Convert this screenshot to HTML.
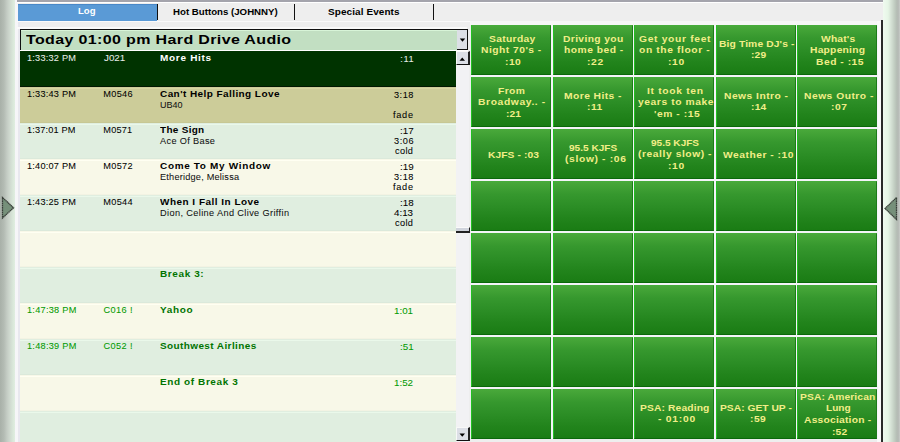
<!DOCTYPE html><html><head><meta charset="utf-8"><style>
*{margin:0;padding:0;box-sizing:border-box}
html,body{width:900px;height:442px;overflow:hidden;background:#eeeeee;font-family:"Liberation Sans",sans-serif}
.a{position:absolute}
.t{position:absolute;white-space:nowrap;line-height:1}
.b{font-weight:bold}
.r{-webkit-text-stroke:0.05px currentColor}
</style></head><body>
<div class="a" style="left:0px;top:0px;width:15px;height:442px;background:linear-gradient(to right,#a8b0a8 0px,#b4bcb4 4px,#c4ccc4 7px,#d0dad0 10px,#dae8da 13px,#e0eee0 15px)"></div>
<div class="a" style="left:15px;top:0px;width:3px;height:442px;background:#f6f6f8"></div>
<div class="a" style="left:18px;top:22px;width:2px;height:420px;background:#e8e8ee"></div>
<div class="a" style="left:883px;top:0px;width:17px;height:442px;background:linear-gradient(to right,#f0faf0 0px,#e6f6e6 5px,#d6e2d6 8px,#c4d0c4 11px,#b4bcb4 14px,#b8bcb8 15.5px,#c8ccc8 17px)"></div>
<div class="a" style="left:17px;top:0px;width:866px;height:2px;background:#a4a4ac"></div>
<div class="a" style="left:17px;top:2px;width:866px;height:1px;background:#ffffff"></div>
<div class="a" style="left:18px;top:4px;width:139px;height:17px;background:#5a9ad6;border-top:1px solid #4a88c8"></div>
<div class="a" style="left:157px;top:4px;width:1px;height:16px;background:#111"></div>
<div class="a" style="left:294px;top:4px;width:1px;height:16px;background:#111"></div>
<div class="a" style="left:433px;top:4px;width:1px;height:16px;background:#111"></div>
<div class="a" style="left:17px;top:21px;width:866px;height:1px;background:#fafafa"></div>
<div class="t b" style="left:77.80px;top:6.47px;font-size:9.6px;color:#ffffff;letter-spacing:0.000px;transform:scaleX(0.9934);transform-origin:0 0">Log</div>
<div class="t b" style="left:173.20px;top:6.87px;font-size:9.6px;color:#000;letter-spacing:0.000px;transform:scaleX(1.0080);transform-origin:0 0">Hot Buttons (JOHNNY)</div>
<div class="t b" style="left:327.80px;top:6.87px;font-size:9.6px;color:#000;letter-spacing:0.082px;transform:scaleX(1.0400);transform-origin:0 0">Special Events</div>
<div class="a" style="left:17px;top:27px;width:450px;height:2px;background:#fafafa"></div>
<div class="a" style="left:20px;top:29px;width:448px;height:21px;background:#c2dfc2;border:1px solid #111;border-bottom:none;box-shadow:inset 0 1px 0 #d8f4d8"></div>
<div class="a" style="left:20px;top:50px;width:448px;height:1px;background:#fff"></div>
<div class="t b" style="left:25.60px;top:32.50px;font-size:13.7px;color:#000;letter-spacing:0.303px;transform:scaleX(1.1700);transform-origin:0 0">Today 01:00 pm Hard Drive Audio</div>
<div class="a" style="left:457px;top:30px;width:10px;height:20px;background:#dcdfe6;border-bottom:1px solid #111"></div>
<svg class="a" style="left:459px;top:38px" width="7" height="5"><polygon points="0.8,0.5 6.2,0.5 3.5,3.8" fill="#000"/></svg>
<div class="a" style="left:20px;top:51px;width:436px;height:36px;background:#003300"></div>
<div class="a" style="left:20px;top:86px;width:436px;height:1px;background:#001800"></div>
<div class="t r" style="left:26.90px;top:53.71px;font-size:9.2px;color:#e8ece8;letter-spacing:0.238px;transform:scaleX(1.0000);transform-origin:0 0">1:33:32 PM</div>
<div class="t r" style="left:103.50px;top:53.71px;font-size:9.2px;color:#e8ece8;letter-spacing:0.000px;transform:scaleX(1.0650);transform-origin:0 0">J021</div>
<div class="t b" style="left:159.70px;top:53.37px;font-size:9.6px;color:#ffffff;letter-spacing:0.676px;transform:scaleX(1.0400);transform-origin:0 0">More Hits</div>
<div class="t r" style="left:400.30px;top:55.11px;font-size:9.2px;color:#e8ece8;letter-spacing:0.551px;transform:scaleX(1.0000);transform-origin:0 0">:11</div>
<div class="a" style="left:20px;top:87px;width:436px;height:36px;background:#cccc99"></div>
<div class="a" style="left:20px;top:88px;width:436px;height:1px;background:#d6d6a3"></div>
<div class="a" style="left:20px;top:122px;width:436px;height:1px;background:#c7c794"></div>
<div class="t r" style="left:26.90px;top:89.71px;font-size:9.2px;color:#000;letter-spacing:0.238px;transform:scaleX(1.0000);transform-origin:0 0">1:33:43 PM</div>
<div class="t r" style="left:103.30px;top:89.71px;font-size:9.2px;color:#000;letter-spacing:0.312px;transform:scaleX(1.0000);transform-origin:0 0">M0546</div>
<div class="t b" style="left:159.70px;top:89.37px;font-size:9.6px;color:#000;letter-spacing:0.416px;transform:scaleX(1.0400);transform-origin:0 0">Can't Help Falling Love</div>
<div class="t r" style="left:160.00px;top:100.51px;font-size:9.2px;color:#111;letter-spacing:0.000px;transform:scaleX(0.9783);transform-origin:0 0">UB40</div>
<div class="t r" style="left:393.90px;top:91.11px;font-size:9.2px;color:#000;letter-spacing:0.569px;transform:scaleX(1.0000);transform-origin:0 0">3:18</div>
<div class="t r" style="left:393.00px;top:110.71px;font-size:9.2px;color:#000;letter-spacing:0.702px;transform:scaleX(1.0000);transform-origin:0 0">fade</div>
<div class="a" style="left:20px;top:123px;width:436px;height:36px;background:#e0eee0"></div>
<div class="a" style="left:20px;top:124px;width:436px;height:1px;background:#eaf8ea"></div>
<div class="a" style="left:20px;top:158px;width:436px;height:1px;background:#dbe9db"></div>
<div class="t r" style="left:26.90px;top:125.71px;font-size:9.2px;color:#000;letter-spacing:0.171px;transform:scaleX(1.0000);transform-origin:0 0">1:37:01 PM</div>
<div class="t r" style="left:103.30px;top:125.71px;font-size:9.2px;color:#000;letter-spacing:0.187px;transform:scaleX(1.0000);transform-origin:0 0">M0571</div>
<div class="t b" style="left:160.00px;top:125.37px;font-size:9.6px;color:#000;letter-spacing:0.284px;transform:scaleX(1.0400);transform-origin:0 0">The Sign</div>
<div class="t r" style="left:160.00px;top:136.51px;font-size:9.2px;color:#111;letter-spacing:0.334px;transform:scaleX(1.0000);transform-origin:0 0">Ace Of Base</div>
<div class="t r" style="left:399.88px;top:127.11px;font-size:9.2px;color:#000;letter-spacing:0.000px;transform:scaleX(1.0650);transform-origin:0 0">:17</div>
<div class="t r" style="left:394.00px;top:136.91px;font-size:9.2px;color:#000;letter-spacing:0.569px;transform:scaleX(1.0000);transform-origin:0 0">3:06</div>
<div class="t r" style="left:395.00px;top:146.71px;font-size:9.2px;color:#000;letter-spacing:0.373px;transform:scaleX(1.0000);transform-origin:0 0">cold</div>
<div class="a" style="left:20px;top:159px;width:436px;height:36px;background:#f8f8e8"></div>
<div class="a" style="left:20px;top:160px;width:436px;height:1px;background:#fffff2"></div>
<div class="a" style="left:20px;top:194px;width:436px;height:1px;background:#f3f3e3"></div>
<div class="t r" style="left:26.90px;top:161.71px;font-size:9.2px;color:#000;letter-spacing:0.238px;transform:scaleX(1.0000);transform-origin:0 0">1:40:07 PM</div>
<div class="t r" style="left:103.30px;top:161.71px;font-size:9.2px;color:#000;letter-spacing:0.312px;transform:scaleX(1.0000);transform-origin:0 0">M0572</div>
<div class="t b" style="left:160.00px;top:161.37px;font-size:9.6px;color:#000;letter-spacing:0.644px;transform:scaleX(1.0400);transform-origin:0 0">Come To My Window</div>
<div class="t r" style="left:160.00px;top:172.51px;font-size:9.2px;color:#111;letter-spacing:0.205px;transform:scaleX(1.0000);transform-origin:0 0">Etheridge, Melissa</div>
<div class="t r" style="left:399.88px;top:163.11px;font-size:9.2px;color:#000;letter-spacing:0.000px;transform:scaleX(1.0650);transform-origin:0 0">:19</div>
<div class="t r" style="left:393.90px;top:172.91px;font-size:9.2px;color:#000;letter-spacing:0.569px;transform:scaleX(1.0000);transform-origin:0 0">3:18</div>
<div class="t r" style="left:393.00px;top:182.71px;font-size:9.2px;color:#000;letter-spacing:0.702px;transform:scaleX(1.0000);transform-origin:0 0">fade</div>
<div class="a" style="left:20px;top:195px;width:436px;height:36px;background:#e0eee0"></div>
<div class="a" style="left:20px;top:196px;width:436px;height:1px;background:#eaf8ea"></div>
<div class="a" style="left:20px;top:230px;width:436px;height:1px;background:#dbe9db"></div>
<div class="t r" style="left:26.90px;top:197.71px;font-size:9.2px;color:#000;letter-spacing:0.238px;transform:scaleX(1.0000);transform-origin:0 0">1:43:25 PM</div>
<div class="t r" style="left:103.30px;top:197.71px;font-size:9.2px;color:#000;letter-spacing:0.312px;transform:scaleX(1.0000);transform-origin:0 0">M0544</div>
<div class="t b" style="left:160.00px;top:197.37px;font-size:9.6px;color:#000;letter-spacing:0.470px;transform:scaleX(1.0400);transform-origin:0 0">When I Fall In Love</div>
<div class="t r" style="left:160.00px;top:208.51px;font-size:9.2px;color:#111;letter-spacing:0.371px;transform:scaleX(1.0000);transform-origin:0 0">Dion, Celine And Clive Griffin</div>
<div class="t r" style="left:399.88px;top:199.11px;font-size:9.2px;color:#000;letter-spacing:0.000px;transform:scaleX(1.0650);transform-origin:0 0">:18</div>
<div class="t r" style="left:394.43px;top:208.91px;font-size:9.2px;color:#000;letter-spacing:0.000px;transform:scaleX(1.0650);transform-origin:0 0">4:13</div>
<div class="t r" style="left:395.00px;top:218.71px;font-size:9.2px;color:#000;letter-spacing:0.373px;transform:scaleX(1.0000);transform-origin:0 0">cold</div>
<div class="a" style="left:20px;top:231px;width:436px;height:36px;background:#f8f8e8"></div>
<div class="a" style="left:20px;top:232px;width:436px;height:1px;background:#fffff2"></div>
<div class="a" style="left:20px;top:266px;width:436px;height:1px;background:#f3f3e3"></div>
<div class="a" style="left:20px;top:267px;width:436px;height:36px;background:#e0eee0"></div>
<div class="a" style="left:20px;top:268px;width:436px;height:1px;background:#eaf8ea"></div>
<div class="a" style="left:20px;top:302px;width:436px;height:1px;background:#dbe9db"></div>
<div class="t b" style="left:159.50px;top:269.37px;font-size:9.6px;color:#007400;letter-spacing:0.592px;transform:scaleX(1.0400);transform-origin:0 0">Break 3:</div>
<div class="a" style="left:20px;top:303px;width:436px;height:36px;background:#f8f8e8"></div>
<div class="a" style="left:20px;top:304px;width:436px;height:1px;background:#fffff2"></div>
<div class="a" style="left:20px;top:338px;width:436px;height:1px;background:#f3f3e3"></div>
<div class="t r" style="left:27.00px;top:305.71px;font-size:9.2px;color:#009a00;letter-spacing:0.260px;transform:scaleX(1.0000);transform-origin:0 0">1:47:38 PM</div>
<div class="t r" style="left:103.40px;top:305.71px;font-size:9.2px;color:#009a00;letter-spacing:0.401px;transform:scaleX(1.0000);transform-origin:0 0">C016 !</div>
<div class="t b" style="left:160.00px;top:305.37px;font-size:9.6px;color:#007400;letter-spacing:0.637px;transform:scaleX(1.0400);transform-origin:0 0">Yahoo</div>
<div class="t r" style="left:394.43px;top:307.11px;font-size:9.2px;color:#009a00;letter-spacing:0.000px;transform:scaleX(1.0650);transform-origin:0 0">1:01</div>
<div class="a" style="left:20px;top:339px;width:436px;height:36px;background:#e0eee0"></div>
<div class="a" style="left:20px;top:340px;width:436px;height:1px;background:#eaf8ea"></div>
<div class="a" style="left:20px;top:374px;width:436px;height:1px;background:#dbe9db"></div>
<div class="t r" style="left:27.00px;top:341.71px;font-size:9.2px;color:#009a00;letter-spacing:0.260px;transform:scaleX(1.0000);transform-origin:0 0">1:48:39 PM</div>
<div class="t r" style="left:103.40px;top:341.71px;font-size:9.2px;color:#009a00;letter-spacing:0.401px;transform:scaleX(1.0000);transform-origin:0 0">C052 !</div>
<div class="t b" style="left:160.00px;top:341.37px;font-size:9.6px;color:#007400;letter-spacing:0.384px;transform:scaleX(1.0400);transform-origin:0 0">Southwest Airlines</div>
<div class="t r" style="left:399.88px;top:343.11px;font-size:9.2px;color:#009a00;letter-spacing:0.000px;transform:scaleX(1.0650);transform-origin:0 0">:51</div>
<div class="a" style="left:20px;top:375px;width:436px;height:36px;background:#f8f8e8"></div>
<div class="a" style="left:20px;top:376px;width:436px;height:1px;background:#fffff2"></div>
<div class="a" style="left:20px;top:410px;width:436px;height:1px;background:#f3f3e3"></div>
<div class="t b" style="left:160.00px;top:377.37px;font-size:9.6px;color:#007400;letter-spacing:0.585px;transform:scaleX(1.0400);transform-origin:0 0">End of Break 3</div>
<div class="t r" style="left:394.43px;top:379.11px;font-size:9.2px;color:#009a00;letter-spacing:0.000px;transform:scaleX(1.0650);transform-origin:0 0">1:52</div>
<div class="a" style="left:20px;top:411px;width:436px;height:36px;background:#e0eee0"></div>
<div class="a" style="left:20px;top:412px;width:436px;height:1px;background:#eaf8ea"></div>
<div class="a" style="left:20px;top:446px;width:436px;height:1px;background:#dbe9db"></div>
<div class="a" style="left:456px;top:51px;width:13px;height:391px;background:#f2f2f4"></div>
<div class="a" style="left:456px;top:51px;width:14px;height:14px;background:#dcdfe6;border-top:1px solid #f8f8f8;border-left:1px solid #f8f8f8;border-right:2px solid #222;border-bottom:1px solid #111"></div>
<svg class="a" style="left:459px;top:56.5px" width="7" height="5"><polygon points="0.5,3.8 6,3.8 3.25,0.4" fill="#000"/></svg>
<div class="a" style="left:456px;top:427px;width:14px;height:14px;background:#dcdfe6;border-top:1px solid #f8f8f8;border-left:1px solid #f8f8f8;border-right:2px solid #222;border-bottom:1px solid #111"></div>
<svg class="a" style="left:459px;top:432.5px" width="7" height="5"><polygon points="0.5,0.4 6,0.4 3.25,3.8" fill="#000"/></svg>
<div class="a" style="left:456px;top:227px;width:14px;height:6px;background:#d0d4dc;border-right:1.5px solid #222;border-bottom:2px solid #222;border-top:1px solid #fafafa"></div>
<div class="a" style="left:470px;top:21px;width:413px;height:4px;background:#f6f6f6"></div>
<div class="a" style="left:881px;top:20px;width:2px;height:422px;background:#2a2a2a"></div>
<div class="a" style="left:877px;top:21px;width:4px;height:421px;background:#fafafa"></div>
<div class="a" style="left:471px;top:25px;width:406.5px;height:414px;background:#f4f4f8"></div>
<div class="a" style="left:471.00px;top:25px;width:80.1px;height:50px;background:linear-gradient(#48a83a,#36982e 25%,#2c8e26 50%,#22841c 75%,#1a7c14);border-left:1px solid #22c022;border-top:1px solid #46ac3a;border-right:1px solid #1c7c18;border-bottom:1px solid #0a680a"></div>
<div class="t b" style="left:488.50px;top:33.51px;font-size:9.9px;color:#f2ee88;letter-spacing:0.320px;transform:scaleX(1.0400);transform-origin:0 0">Saturday</div>
<div class="t b" style="left:481.30px;top:45.21px;font-size:9.9px;color:#f2ee88;letter-spacing:0.465px;transform:scaleX(1.0400);transform-origin:0 0">Night 70's -</div>
<div class="t b" style="left:505.20px;top:56.91px;font-size:9.9px;color:#f2ee88;letter-spacing:0.443px;transform:scaleX(1.0400);transform-origin:0 0">:10</div>
<div class="a" style="left:552.60px;top:25px;width:80.1px;height:50px;background:linear-gradient(#48a83a,#36982e 25%,#2c8e26 50%,#22841c 75%,#1a7c14);border-left:1px solid #22c022;border-top:1px solid #46ac3a;border-right:1px solid #1c7c18;border-bottom:1px solid #0a680a"></div>
<div class="t b" style="left:562.80px;top:33.51px;font-size:9.9px;color:#f2ee88;letter-spacing:0.353px;transform:scaleX(1.0400);transform-origin:0 0">Driving you</div>
<div class="t b" style="left:563.70px;top:45.21px;font-size:9.9px;color:#f2ee88;letter-spacing:0.478px;transform:scaleX(1.0400);transform-origin:0 0">home bed -</div>
<div class="t b" style="left:587.10px;top:56.91px;font-size:9.9px;color:#f2ee88;letter-spacing:0.636px;transform:scaleX(1.0400);transform-origin:0 0">:22</div>
<div class="a" style="left:634.20px;top:25px;width:80.1px;height:50px;background:linear-gradient(#48a83a,#36982e 25%,#2c8e26 50%,#22841c 75%,#1a7c14);border-left:1px solid #22c022;border-top:1px solid #46ac3a;border-right:1px solid #1c7c18;border-bottom:1px solid #0a680a"></div>
<div class="t b" style="left:639.00px;top:33.51px;font-size:9.9px;color:#f2ee88;letter-spacing:0.655px;transform:scaleX(1.0400);transform-origin:0 0">Get your feet</div>
<div class="t b" style="left:639.00px;top:45.21px;font-size:9.9px;color:#f2ee88;letter-spacing:0.584px;transform:scaleX(1.0400);transform-origin:0 0">on the floor -</div>
<div class="t b" style="left:668.10px;top:56.91px;font-size:9.9px;color:#f2ee88;letter-spacing:0.636px;transform:scaleX(1.0400);transform-origin:0 0">:10</div>
<div class="a" style="left:715.80px;top:25px;width:80.1px;height:50px;background:linear-gradient(#48a83a,#36982e 25%,#2c8e26 50%,#22841c 75%,#1a7c14);border-left:1px solid #22c022;border-top:1px solid #46ac3a;border-right:1px solid #1c7c18;border-bottom:1px solid #0a680a"></div>
<div class="t b" style="left:718.70px;top:38.76px;font-size:9.9px;color:#f2ee88;letter-spacing:0.126px;transform:scaleX(1.0400);transform-origin:0 0">Big Time DJ's -</div>
<div class="t b" style="left:750.80px;top:50.46px;font-size:9.9px;color:#f2ee88;letter-spacing:0.155px;transform:scaleX(1.0400);transform-origin:0 0">:29</div>
<div class="a" style="left:797.40px;top:25px;width:80.1px;height:50px;background:linear-gradient(#48a83a,#36982e 25%,#2c8e26 50%,#22841c 75%,#1a7c14);border-left:1px solid #22c022;border-top:1px solid #46ac3a;border-right:1px solid #1c7c18;border-bottom:1px solid #0a680a"></div>
<div class="t b" style="left:821.00px;top:33.51px;font-size:9.9px;color:#f2ee88;letter-spacing:0.181px;transform:scaleX(1.0400);transform-origin:0 0">What's</div>
<div class="t b" style="left:810.30px;top:45.21px;font-size:9.9px;color:#f2ee88;letter-spacing:0.231px;transform:scaleX(1.0400);transform-origin:0 0">Happening</div>
<div class="t b" style="left:815.50px;top:56.91px;font-size:9.9px;color:#f2ee88;letter-spacing:0.505px;transform:scaleX(1.0400);transform-origin:0 0">Bed - :15</div>
<div class="a" style="left:471.00px;top:77px;width:80.1px;height:50px;background:linear-gradient(#48a83a,#36982e 25%,#2c8e26 50%,#22841c 75%,#1a7c14);border-left:1px solid #22c022;border-top:1px solid #46ac3a;border-right:1px solid #1c7c18;border-bottom:1px solid #0a680a"></div>
<div class="t b" style="left:498.00px;top:85.51px;font-size:9.9px;color:#f2ee88;letter-spacing:0.404px;transform:scaleX(1.0400);transform-origin:0 0">From</div>
<div class="t b" style="left:477.80px;top:97.21px;font-size:9.9px;color:#f2ee88;letter-spacing:0.609px;transform:scaleX(1.0400);transform-origin:0 0">Broadway.. -</div>
<div class="t b" style="left:505.60px;top:108.91px;font-size:9.9px;color:#f2ee88;letter-spacing:0.011px;transform:scaleX(1.0400);transform-origin:0 0">:21</div>
<div class="a" style="left:552.60px;top:77px;width:80.1px;height:50px;background:linear-gradient(#48a83a,#36982e 25%,#2c8e26 50%,#22841c 75%,#1a7c14);border-left:1px solid #22c022;border-top:1px solid #46ac3a;border-right:1px solid #1c7c18;border-bottom:1px solid #0a680a"></div>
<div class="t b" style="left:564.20px;top:90.76px;font-size:9.9px;color:#f2ee88;letter-spacing:0.425px;transform:scaleX(1.0400);transform-origin:0 0">More Hits -</div>
<div class="t b" style="left:587.10px;top:102.46px;font-size:9.9px;color:#f2ee88;letter-spacing:0.475px;transform:scaleX(1.0400);transform-origin:0 0">:11</div>
<div class="a" style="left:634.20px;top:77px;width:80.1px;height:50px;background:linear-gradient(#48a83a,#36982e 25%,#2c8e26 50%,#22841c 75%,#1a7c14);border-left:1px solid #22c022;border-top:1px solid #46ac3a;border-right:1px solid #1c7c18;border-bottom:1px solid #0a680a"></div>
<div class="t b" style="left:647.00px;top:85.51px;font-size:9.9px;color:#f2ee88;letter-spacing:0.672px;transform:scaleX(1.0400);transform-origin:0 0">It took ten</div>
<div class="t b" style="left:637.50px;top:97.21px;font-size:9.9px;color:#f2ee88;letter-spacing:0.555px;transform:scaleX(1.0400);transform-origin:0 0">years to make</div>
<div class="t b" style="left:654.20px;top:108.91px;font-size:9.9px;color:#f2ee88;letter-spacing:0.536px;transform:scaleX(1.0400);transform-origin:0 0">'em - :15</div>
<div class="a" style="left:715.80px;top:77px;width:80.1px;height:50px;background:linear-gradient(#48a83a,#36982e 25%,#2c8e26 50%,#22841c 75%,#1a7c14);border-left:1px solid #22c022;border-top:1px solid #46ac3a;border-right:1px solid #1c7c18;border-bottom:1px solid #0a680a"></div>
<div class="t b" style="left:723.90px;top:90.76px;font-size:9.9px;color:#f2ee88;letter-spacing:0.459px;transform:scaleX(1.0400);transform-origin:0 0">News Intro -</div>
<div class="t b" style="left:750.90px;top:102.46px;font-size:9.9px;color:#f2ee88;letter-spacing:0.203px;transform:scaleX(1.0400);transform-origin:0 0">:14</div>
<div class="a" style="left:797.40px;top:77px;width:80.1px;height:50px;background:linear-gradient(#48a83a,#36982e 25%,#2c8e26 50%,#22841c 75%,#1a7c14);border-left:1px solid #22c022;border-top:1px solid #46ac3a;border-right:1px solid #1c7c18;border-bottom:1px solid #0a680a"></div>
<div class="t b" style="left:803.50px;top:90.76px;font-size:9.9px;color:#f2ee88;letter-spacing:0.481px;transform:scaleX(1.0400);transform-origin:0 0">News Outro -</div>
<div class="t b" style="left:831.40px;top:102.46px;font-size:9.9px;color:#f2ee88;letter-spacing:0.491px;transform:scaleX(1.0400);transform-origin:0 0">:07</div>
<div class="a" style="left:471.00px;top:129px;width:80.1px;height:50px;background:linear-gradient(#48a83a,#36982e 25%,#2c8e26 50%,#22841c 75%,#1a7c14);border-left:1px solid #22c022;border-top:1px solid #46ac3a;border-right:1px solid #1c7c18;border-bottom:1px solid #0a680a"></div>
<div class="t b" style="left:487.80px;top:149.61px;font-size:9.9px;color:#f2ee88;letter-spacing:0.070px;transform:scaleX(1.0400);transform-origin:0 0">KJFS - :03</div>
<div class="a" style="left:552.60px;top:129px;width:80.1px;height:50px;background:linear-gradient(#48a83a,#36982e 25%,#2c8e26 50%,#22841c 75%,#1a7c14);border-left:1px solid #22c022;border-top:1px solid #46ac3a;border-right:1px solid #1c7c18;border-bottom:1px solid #0a680a"></div>
<div class="t b" style="left:569.10px;top:142.76px;font-size:9.9px;color:#f2ee88;letter-spacing:0.000px;transform:scaleX(1.0207);transform-origin:0 0">95.5 KJFS</div>
<div class="t b" style="left:564.50px;top:154.46px;font-size:9.9px;color:#f2ee88;letter-spacing:0.630px;transform:scaleX(1.0400);transform-origin:0 0">(slow) - :06</div>
<div class="a" style="left:634.20px;top:129px;width:80.1px;height:50px;background:linear-gradient(#48a83a,#36982e 25%,#2c8e26 50%,#22841c 75%,#1a7c14);border-left:1px solid #22c022;border-top:1px solid #46ac3a;border-right:1px solid #1c7c18;border-bottom:1px solid #0a680a"></div>
<div class="t b" style="left:651.00px;top:137.51px;font-size:9.9px;color:#f2ee88;letter-spacing:0.000px;transform:scaleX(1.0186);transform-origin:0 0">95.5 KJFS</div>
<div class="t b" style="left:637.60px;top:149.21px;font-size:9.9px;color:#f2ee88;letter-spacing:0.543px;transform:scaleX(1.0400);transform-origin:0 0">(really slow) -</div>
<div class="t b" style="left:668.10px;top:160.91px;font-size:9.9px;color:#f2ee88;letter-spacing:0.636px;transform:scaleX(1.0400);transform-origin:0 0">:10</div>
<div class="a" style="left:715.80px;top:129px;width:80.1px;height:50px;background:linear-gradient(#48a83a,#36982e 25%,#2c8e26 50%,#22841c 75%,#1a7c14);border-left:1px solid #22c022;border-top:1px solid #46ac3a;border-right:1px solid #1c7c18;border-bottom:1px solid #0a680a"></div>
<div class="t b" style="left:722.60px;top:149.61px;font-size:9.9px;color:#f2ee88;letter-spacing:0.493px;transform:scaleX(1.0400);transform-origin:0 0">Weather - :10</div>
<div class="a" style="left:797.40px;top:129px;width:80.1px;height:50px;background:linear-gradient(#48a83a,#36982e 25%,#2c8e26 50%,#22841c 75%,#1a7c14);border-left:1px solid #22c022;border-top:1px solid #46ac3a;border-right:1px solid #1c7c18;border-bottom:1px solid #0a680a"></div>
<div class="a" style="left:471.00px;top:181px;width:80.1px;height:50px;background:linear-gradient(#48a83a,#36982e 25%,#2c8e26 50%,#22841c 75%,#1a7c14);border-left:1px solid #22c022;border-top:1px solid #46ac3a;border-right:1px solid #1c7c18;border-bottom:1px solid #0a680a"></div>
<div class="a" style="left:552.60px;top:181px;width:80.1px;height:50px;background:linear-gradient(#48a83a,#36982e 25%,#2c8e26 50%,#22841c 75%,#1a7c14);border-left:1px solid #22c022;border-top:1px solid #46ac3a;border-right:1px solid #1c7c18;border-bottom:1px solid #0a680a"></div>
<div class="a" style="left:634.20px;top:181px;width:80.1px;height:50px;background:linear-gradient(#48a83a,#36982e 25%,#2c8e26 50%,#22841c 75%,#1a7c14);border-left:1px solid #22c022;border-top:1px solid #46ac3a;border-right:1px solid #1c7c18;border-bottom:1px solid #0a680a"></div>
<div class="a" style="left:715.80px;top:181px;width:80.1px;height:50px;background:linear-gradient(#48a83a,#36982e 25%,#2c8e26 50%,#22841c 75%,#1a7c14);border-left:1px solid #22c022;border-top:1px solid #46ac3a;border-right:1px solid #1c7c18;border-bottom:1px solid #0a680a"></div>
<div class="a" style="left:797.40px;top:181px;width:80.1px;height:50px;background:linear-gradient(#48a83a,#36982e 25%,#2c8e26 50%,#22841c 75%,#1a7c14);border-left:1px solid #22c022;border-top:1px solid #46ac3a;border-right:1px solid #1c7c18;border-bottom:1px solid #0a680a"></div>
<div class="a" style="left:471.00px;top:233px;width:80.1px;height:50px;background:linear-gradient(#48a83a,#36982e 25%,#2c8e26 50%,#22841c 75%,#1a7c14);border-left:1px solid #22c022;border-top:1px solid #46ac3a;border-right:1px solid #1c7c18;border-bottom:1px solid #0a680a"></div>
<div class="a" style="left:552.60px;top:233px;width:80.1px;height:50px;background:linear-gradient(#48a83a,#36982e 25%,#2c8e26 50%,#22841c 75%,#1a7c14);border-left:1px solid #22c022;border-top:1px solid #46ac3a;border-right:1px solid #1c7c18;border-bottom:1px solid #0a680a"></div>
<div class="a" style="left:634.20px;top:233px;width:80.1px;height:50px;background:linear-gradient(#48a83a,#36982e 25%,#2c8e26 50%,#22841c 75%,#1a7c14);border-left:1px solid #22c022;border-top:1px solid #46ac3a;border-right:1px solid #1c7c18;border-bottom:1px solid #0a680a"></div>
<div class="a" style="left:715.80px;top:233px;width:80.1px;height:50px;background:linear-gradient(#48a83a,#36982e 25%,#2c8e26 50%,#22841c 75%,#1a7c14);border-left:1px solid #22c022;border-top:1px solid #46ac3a;border-right:1px solid #1c7c18;border-bottom:1px solid #0a680a"></div>
<div class="a" style="left:797.40px;top:233px;width:80.1px;height:50px;background:linear-gradient(#48a83a,#36982e 25%,#2c8e26 50%,#22841c 75%,#1a7c14);border-left:1px solid #22c022;border-top:1px solid #46ac3a;border-right:1px solid #1c7c18;border-bottom:1px solid #0a680a"></div>
<div class="a" style="left:471.00px;top:285px;width:80.1px;height:50px;background:linear-gradient(#48a83a,#36982e 25%,#2c8e26 50%,#22841c 75%,#1a7c14);border-left:1px solid #22c022;border-top:1px solid #46ac3a;border-right:1px solid #1c7c18;border-bottom:1px solid #0a680a"></div>
<div class="a" style="left:552.60px;top:285px;width:80.1px;height:50px;background:linear-gradient(#48a83a,#36982e 25%,#2c8e26 50%,#22841c 75%,#1a7c14);border-left:1px solid #22c022;border-top:1px solid #46ac3a;border-right:1px solid #1c7c18;border-bottom:1px solid #0a680a"></div>
<div class="a" style="left:634.20px;top:285px;width:80.1px;height:50px;background:linear-gradient(#48a83a,#36982e 25%,#2c8e26 50%,#22841c 75%,#1a7c14);border-left:1px solid #22c022;border-top:1px solid #46ac3a;border-right:1px solid #1c7c18;border-bottom:1px solid #0a680a"></div>
<div class="a" style="left:715.80px;top:285px;width:80.1px;height:50px;background:linear-gradient(#48a83a,#36982e 25%,#2c8e26 50%,#22841c 75%,#1a7c14);border-left:1px solid #22c022;border-top:1px solid #46ac3a;border-right:1px solid #1c7c18;border-bottom:1px solid #0a680a"></div>
<div class="a" style="left:797.40px;top:285px;width:80.1px;height:50px;background:linear-gradient(#48a83a,#36982e 25%,#2c8e26 50%,#22841c 75%,#1a7c14);border-left:1px solid #22c022;border-top:1px solid #46ac3a;border-right:1px solid #1c7c18;border-bottom:1px solid #0a680a"></div>
<div class="a" style="left:471.00px;top:337px;width:80.1px;height:50px;background:linear-gradient(#48a83a,#36982e 25%,#2c8e26 50%,#22841c 75%,#1a7c14);border-left:1px solid #22c022;border-top:1px solid #46ac3a;border-right:1px solid #1c7c18;border-bottom:1px solid #0a680a"></div>
<div class="a" style="left:552.60px;top:337px;width:80.1px;height:50px;background:linear-gradient(#48a83a,#36982e 25%,#2c8e26 50%,#22841c 75%,#1a7c14);border-left:1px solid #22c022;border-top:1px solid #46ac3a;border-right:1px solid #1c7c18;border-bottom:1px solid #0a680a"></div>
<div class="a" style="left:634.20px;top:337px;width:80.1px;height:50px;background:linear-gradient(#48a83a,#36982e 25%,#2c8e26 50%,#22841c 75%,#1a7c14);border-left:1px solid #22c022;border-top:1px solid #46ac3a;border-right:1px solid #1c7c18;border-bottom:1px solid #0a680a"></div>
<div class="a" style="left:715.80px;top:337px;width:80.1px;height:50px;background:linear-gradient(#48a83a,#36982e 25%,#2c8e26 50%,#22841c 75%,#1a7c14);border-left:1px solid #22c022;border-top:1px solid #46ac3a;border-right:1px solid #1c7c18;border-bottom:1px solid #0a680a"></div>
<div class="a" style="left:797.40px;top:337px;width:80.1px;height:50px;background:linear-gradient(#48a83a,#36982e 25%,#2c8e26 50%,#22841c 75%,#1a7c14);border-left:1px solid #22c022;border-top:1px solid #46ac3a;border-right:1px solid #1c7c18;border-bottom:1px solid #0a680a"></div>
<div class="a" style="left:471.00px;top:389px;width:80.1px;height:50px;background:linear-gradient(#48a83a,#36982e 25%,#2c8e26 50%,#22841c 75%,#1a7c14);border-left:1px solid #22c022;border-top:1px solid #46ac3a;border-right:1px solid #1c7c18;border-bottom:1px solid #0a680a"></div>
<div class="a" style="left:552.60px;top:389px;width:80.1px;height:50px;background:linear-gradient(#48a83a,#36982e 25%,#2c8e26 50%,#22841c 75%,#1a7c14);border-left:1px solid #22c022;border-top:1px solid #46ac3a;border-right:1px solid #1c7c18;border-bottom:1px solid #0a680a"></div>
<div class="a" style="left:634.20px;top:389px;width:80.1px;height:50px;background:linear-gradient(#48a83a,#36982e 25%,#2c8e26 50%,#22841c 75%,#1a7c14);border-left:1px solid #22c022;border-top:1px solid #46ac3a;border-right:1px solid #1c7c18;border-bottom:1px solid #0a680a"></div>
<div class="t b" style="left:640.10px;top:402.76px;font-size:9.9px;color:#f2ee88;letter-spacing:0.126px;transform:scaleX(1.0400);transform-origin:0 0">PSA: Reading</div>
<div class="t b" style="left:658.20px;top:414.46px;font-size:9.9px;color:#f2ee88;letter-spacing:0.763px;transform:scaleX(1.0400);transform-origin:0 0">- 01:00</div>
<div class="a" style="left:715.80px;top:389px;width:80.1px;height:50px;background:linear-gradient(#48a83a,#36982e 25%,#2c8e26 50%,#22841c 75%,#1a7c14);border-left:1px solid #22c022;border-top:1px solid #46ac3a;border-right:1px solid #1c7c18;border-bottom:1px solid #0a680a"></div>
<div class="t b" style="left:720.30px;top:402.76px;font-size:9.9px;color:#f2ee88;letter-spacing:0.007px;transform:scaleX(1.0400);transform-origin:0 0">PSA: GET UP -</div>
<div class="t b" style="left:750.40px;top:414.46px;font-size:9.9px;color:#f2ee88;letter-spacing:0.443px;transform:scaleX(1.0400);transform-origin:0 0">:59</div>
<div class="a" style="left:797.40px;top:389px;width:80.1px;height:50px;background:linear-gradient(#48a83a,#36982e 25%,#2c8e26 50%,#22841c 75%,#1a7c14);border-left:1px solid #22c022;border-top:1px solid #46ac3a;border-right:1px solid #1c7c18;border-bottom:1px solid #0a680a"></div>
<div class="t b" style="left:800.20px;top:391.76px;font-size:9.9px;color:#f2ee88;letter-spacing:0.118px;transform:scaleX(1.0400);transform-origin:0 0">PSA: American</div>
<div class="t b" style="left:825.80px;top:403.46px;font-size:9.9px;color:#f2ee88;letter-spacing:0.000px;transform:scaleX(1.0204);transform-origin:0 0">Lung</div>
<div class="t b" style="left:804.10px;top:415.16px;font-size:9.9px;color:#f2ee88;letter-spacing:0.212px;transform:scaleX(1.0400);transform-origin:0 0">Association -</div>
<div class="t b" style="left:832.40px;top:426.86px;font-size:9.9px;color:#f2ee88;letter-spacing:0.155px;transform:scaleX(1.0400);transform-origin:0 0">:52</div>
<svg class="a" style="left:0;top:195px" width="16" height="26"><polygon points="2.5,2.5 2.5,23 13.5,12.8" fill="#76907a" stroke="#383e38" stroke-width="1.3" stroke-dasharray="1.4 0.4"/></svg>
<svg class="a" style="left:883px;top:195px" width="17" height="27"><polygon points="13.5,2.5 13.5,24.5 2,13.5" fill="#76907a" stroke="#383e38" stroke-width="1.3" stroke-dasharray="1.4 0.4"/></svg>
</body></html>
